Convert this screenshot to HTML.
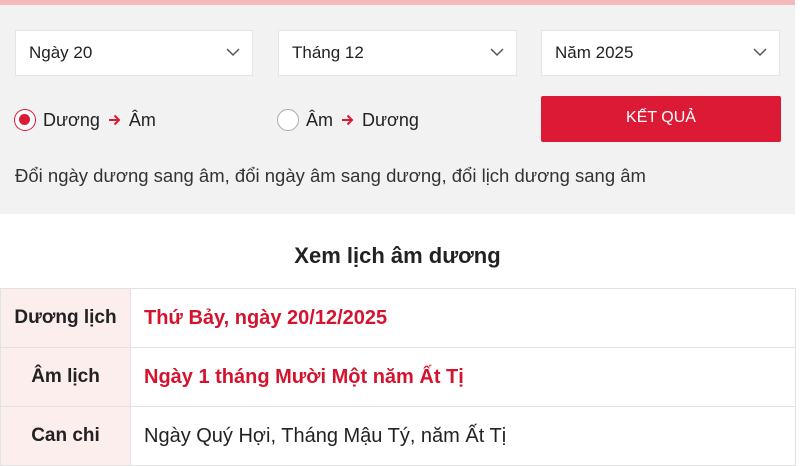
<!DOCTYPE html>
<html><head><meta charset="utf-8"><style>
*{box-sizing:border-box;margin:0;padding:0}
body{width:800px;height:462px;overflow:hidden;background:#fff;font-family:"Liberation Sans",sans-serif;color:#222;position:relative}
.strip{position:absolute;left:0;top:0;width:795px;height:5px;background:#f4b9b9}
.panel{position:absolute;left:0;top:5px;width:795px;height:209px;background:#f2f2f2}
.sel{position:absolute;top:30px;height:46px;background:#fff;border:1px solid #e4e4e4;font-size:17px;line-height:44px;padding-left:13px;color:#222}
.sel svg{position:absolute;right:12px;top:17px}
.radio{position:absolute;top:108px;font-size:18px;line-height:24px;display:flex;align-items:center}
.rc{width:22px;height:22px;border-radius:50%;border:1.5px solid #aaa;background:#fff;margin-right:7px;position:relative}
.rc.on{border-color:#dc1a35}
.rc.on:after{content:"";position:absolute;left:4px;top:4px;width:11px;height:11px;border-radius:50%;background:#dc1a35}
.ar{margin:0 8px;display:inline-block}
.btn{position:absolute;left:541px;top:96px;width:240px;height:46px;background:#dc1a35;border-radius:2px;color:#fff;font-size:16px;text-align:center;line-height:44px}
.desc{position:absolute;left:15px;top:165px;font-size:18.5px;color:#333}
h2{position:absolute;left:0;width:795px;top:243px;text-align:center;font-size:22px;font-weight:bold;color:#222}
table{position:absolute;left:0;top:288px;width:796px;border-collapse:collapse}
td{border:1px solid #e2e2e2;height:59px;font-size:19px;vertical-align:middle}
td.l{width:130px;background:#fdeeee;text-align:center;font-weight:bold;color:#222}
td.v{padding-left:13px;font-size:20px}
.red{color:#d5132e;font-weight:bold}
</style></head><body>
<div class="strip"></div>
<div class="panel"></div>
<div class="sel" style="left:15px;width:238px">Ngày 20<svg width="14" height="9" viewBox="0 0 14 9"><path d="M1 1l6 6 6-6" fill="none" stroke="#555" stroke-width="1.5"/></svg></div>
<div class="sel" style="left:278px;width:239px">Tháng 12<svg width="14" height="9" viewBox="0 0 14 9"><path d="M1 1l6 6 6-6" fill="none" stroke="#555" stroke-width="1.5"/></svg></div>
<div class="sel" style="left:541px;width:239px">Năm 2025<svg width="14" height="9" viewBox="0 0 14 9"><path d="M1 1l6 6 6-6" fill="none" stroke="#555" stroke-width="1.5"/></svg></div>
<div class="radio" style="left:14px"><span class="rc on"></span>Dương<svg class="ar" width="13" height="12" viewBox="0 0 13 12"><path d="M1 6h10M6.5 1.5L11 6l-4.5 4.5" fill="none" stroke="#dc1a35" stroke-width="2"/></svg>Âm</div>
<div class="radio" style="left:277px"><span class="rc"></span>Âm<svg class="ar" width="13" height="12" viewBox="0 0 13 12"><path d="M1 6h10M6.5 1.5L11 6l-4.5 4.5" fill="none" stroke="#dc1a35" stroke-width="2"/></svg>Dương</div>
<div class="btn">KẾT QUẢ</div>
<div class="desc">Đổi ngày dương sang âm, đổi ngày âm sang dương, đổi lịch dương sang âm</div>
<h2>Xem lịch âm dương</h2>
<table>
<tr><td class="l">Dương lịch</td><td class="v red">Thứ Bảy, ngày 20/12/2025</td></tr>
<tr><td class="l">Âm lịch</td><td class="v red">Ngày 1 tháng Mười Một năm Ất Tị</td></tr>
<tr><td class="l">Can chi</td><td class="v">Ngày Quý Hợi, Tháng Mậu Tý, năm Ất Tị</td></tr>
</table>
</body></html>
